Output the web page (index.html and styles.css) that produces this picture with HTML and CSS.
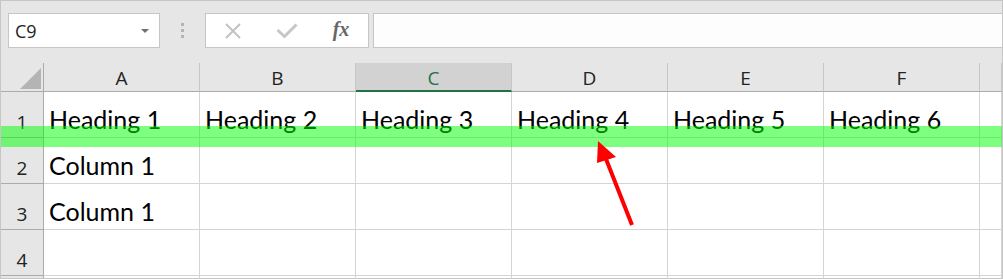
FILE: index.html
```html
<!DOCTYPE html>
<html lang="en">
<head>
  <meta charset="UTF-8">
  <title>Excel - Heading row</title>
  <link rel="stylesheet" href="styles.css">
</head>
<body>

  <div class="window">
    <div class="formula-bar">
      <div class="name-box">
        <span class="cell-ref">C9</span>
        <span class="caret"></span>
      </div>
      <div class="grip"><i></i><i></i><i></i></div>
      <div class="fx-buttons">
        <span class="slot">
          <svg width="18" height="16" viewBox="0 0 18 16">
            <path d="M2 1 L16 15 M16 1 L2 15" stroke="#c2c2c2" stroke-width="2" fill="none"/>
          </svg>
        </span>
        <span class="slot">
          <svg width="22" height="16" viewBox="0 0 22 16">
            <path d="M1.5 7 L8.5 13.5 L20.5 1.5" stroke="#c6c6c6" stroke-width="3" fill="none"/>
          </svg>
        </span>
        <span class="slot fx">fx</span>
      </div>
      <div class="formula-input"></div>
    </div>

    <div class="sheet">
      <div class="grid">
        <div class="col-head corner"><span class="corner-tri"></span></div>
        <div class="col-head">A</div>
        <div class="col-head">B</div>
        <div class="col-head active">C</div>
        <div class="col-head">D</div>
        <div class="col-head">E</div>
        <div class="col-head">F</div>
        <div class="col-head"></div>

        <div class="row-head">1</div>
        <div class="cell">Heading 1</div>
        <div class="cell">Heading 2</div>
        <div class="cell">Heading 3</div>
        <div class="cell">Heading 4</div>
        <div class="cell">Heading 5</div>
        <div class="cell">Heading 6</div>
        <div class="cell"></div>

        <div class="row-head">2</div>
        <div class="cell">Column 1</div>
        <div class="cell"></div>
        <div class="cell"></div>
        <div class="cell"></div>
        <div class="cell"></div>
        <div class="cell"></div>
        <div class="cell"></div>

        <div class="row-head">3</div>
        <div class="cell">Column 1</div>
        <div class="cell"></div>
        <div class="cell"></div>
        <div class="cell"></div>
        <div class="cell"></div>
        <div class="cell"></div>
        <div class="cell"></div>

        <div class="row-head">4</div>
        <div class="cell"></div>
        <div class="cell"></div>
        <div class="cell"></div>
        <div class="cell"></div>
        <div class="cell"></div>
        <div class="cell"></div>
        <div class="cell"></div>

        <div class="row-head"></div>
        <div class="cell"></div>
        <div class="cell"></div>
        <div class="cell"></div>
        <div class="cell"></div>
        <div class="cell"></div>
        <div class="cell"></div>
        <div class="cell"></div>
      </div>

      <!-- annotation overlays -->
      <div class="highlight"></div>
      <svg class="arrow" width="1001" height="216" viewBox="0 0 1001 216">
        <line x1="631" y1="162" x2="605" y2="96" stroke="#ff0000" stroke-width="4"/>
        <polygon points="597,78 615,94 596,100" fill="#ff0000"/>
      </svg>
    </div>
  </div>

</body>
</html>
```

FILE: styles.css
```css
body {
  margin: 0;
  font-family: "Open Sans", sans-serif;
}

.window {
  width: 1003px;
  height: 279px;
  box-sizing: border-box;
  border: 1px solid #c6c6c6;
  background: #e6e6e6;
  overflow: hidden;
}

/* formula bar */

.formula-bar {
  height: 62px;
  box-sizing: border-box;
  padding-top: 12px;
  padding-left: 7px;
  display: flex;
  align-items: flex-start;
}

.name-box {
  width: 152px;
  height: 35px;
  box-sizing: border-box;
  border: 1px solid #c6c6c6;
  background: #fff;
  display: flex;
  align-items: center;
  justify-content: space-between;
  padding: 0 10px 0 6px;
}

.cell-ref {
  font-size: 18px;
  color: #222;
}

.caret {
  width: 0;
  height: 0;
  border-left: 4px solid transparent;
  border-right: 4px solid transparent;
  border-top: 4px solid #707070;
  margin-top: 1px;
}

.grip {
  width: 45px;
  height: 35px;
  display: flex;
  flex-direction: column;
  align-items: center;
  justify-content: center;
  gap: 3px;
}

.grip i {
  display: block;
  width: 3px;
  height: 3px;
  background: #b4b4b4;
}

.fx-buttons {
  width: 164px;
  height: 35px;
  box-sizing: border-box;
  border: 1px solid #c6c6c6;
  background: #fff;
  display: flex;
  align-items: center;
}

.slot {
  width: 54px;
  display: flex;
  justify-content: center;
  align-items: center;
}

.slot svg {
  display: block;
}

.fx {
  font-family: "Liberation Serif", serif;
  font-style: italic;
  font-weight: bold;
  font-size: 20px;
  color: #666;
  margin-top: -2px;
}

.formula-input {
  flex: 1;
  height: 35px;
  box-sizing: border-box;
  margin-left: 4px;
  border: 1px solid #c6c6c6;
  border-right: none;
  background: #fdfdfd;
}

/* sheet */

.sheet {
  position: relative;
}

.grid {
  display: grid;
  grid-template-columns: 43px repeat(6, 156px) 1fr;
  grid-template-rows: 29px repeat(5, 46px);
  background: #fff;
}

.col-head {
  box-sizing: border-box;
  background: #e6e6e6;
  border-right: 1px solid #c6c6c6;
  border-bottom: 1px solid #ababab;
  text-align: center;
  font-size: 19px;
  line-height: 24px;
  padding-top: 3px;
  color: #222;
}

.col-head.corner {
  border-right-color: #ababab;
  position: relative;
}

.corner-tri {
  position: absolute;
  right: 2px;
  bottom: 2px;
  width: 0;
  height: 0;
  border-left: 21px solid transparent;
  border-bottom: 21px solid #b4b4b4;
}

.col-head.active {
  background: #d2d2d2;
  color: #217346;
  border-bottom: 2px solid #217346;
}

.row-head {
  box-sizing: border-box;
  background: #e6e6e6;
  border-right: 1px solid #ababab;
  border-bottom: 1px solid #ababab;
  display: flex;
  align-items: flex-end;
  justify-content: center;
  font-size: 19px;
  line-height: 26px;
  padding-bottom: 2px;
  color: #222;
}

.cell {
  box-sizing: border-box;
  border-right: 1px solid #d4d4d4;
  border-bottom: 1px solid #d4d4d4;
  display: flex;
  align-items: flex-end;
  padding: 0 0 3px 5px;
  font-family: Lato, sans-serif;
  font-size: 25px;
  line-height: 30px;
  color: #000;
  white-space: nowrap;
}

.highlight {
  position: absolute;
  left: -1px;
  right: -1px;
  top: 63px;
  height: 21px;
  background: rgba(0, 255, 0, 0.5);
}

.arrow {
  position: absolute;
  left: 0;
  top: 0;
}
```
